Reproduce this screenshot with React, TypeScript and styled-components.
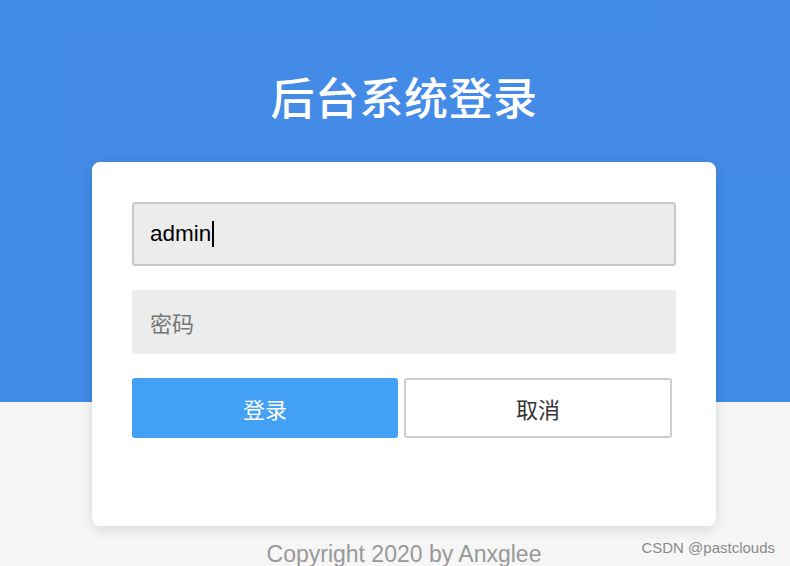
import React from "react";
import styled, { createGlobalStyle } from "styled-components";

const Global = createGlobalStyle`
  html, body { margin: 0; padding: 0; }
  body { font-family: "Liberation Sans", Arial, "Noto Sans CJK SC", sans-serif; }
`;

const Page = styled.div`
  position: relative;
  height: 566px;
  overflow: hidden;
  background: linear-gradient(to bottom, #418ae6 0, #418ae6 402px, #f6f6f6 402px);
  display: flex;
  flex-direction: column;
  align-items: center;
  padding: 70px 0 0 18px;
  box-sizing: border-box;
`;

const Tile = styled.div<{ $x: number; $y: number; $w: number; $h: number; $a: number }>`
  position: absolute;
  left: ${(p) => p.$x}px;
  top: ${(p) => p.$y}px;
  width: ${(p) => p.$w}px;
  height: ${(p) => p.$h}px;
  background: rgba(255, 255, 255, ${(p) => p.$a});
  pointer-events: none;
`;

const Title = styled.h1`
  position: relative;
  margin: 0;
  font-family: "Noto Sans CJK SC", sans-serif;
  font-weight: 500;
  font-size: 44px;
  line-height: 53px;
  color: #ffffff;
  letter-spacing: 0.5px;
`;

const Card = styled.div`
  position: relative;
  margin-top: 39px;
  width: 624px;
  box-sizing: border-box;
  padding: 40px 40px 88px;
  background: #ffffff;
  border-radius: 8px;
  box-shadow: 0 4px 14px rgba(0, 0, 0, 0.12);
  display: flex;
  flex-direction: column;
  gap: 24px;
`;

const Field = styled.div<{ $focused?: boolean }>`
  height: 64px;
  box-sizing: border-box;
  background: #ececec;
  border: 2px solid ${(p) => (p.$focused ? "#c8c8c8" : "#ececec")};
  border-radius: 3px;
  padding: 0 16px;
  display: flex;
  align-items: center;
  font-size: 22px;
`;

const Value = styled.span`
  color: #000;
  font-family: "Liberation Sans", Arial, sans-serif;
  font-size: 22.5px;
`;

const Caret = styled.span`
  display: inline-block;
  width: 2px;
  height: 26px;
  background: #000;
  margin-left: 1px;
`;

const Placeholder = styled.span`
  color: #777;
  font-family: "Noto Sans CJK SC", sans-serif;
  font-size: 22px;
`;

const Buttons = styled.div`
  display: flex;
  gap: 6px;
`;

const Button = styled.button<{ $primary?: boolean }>`
  height: 60px;
  width: ${(p) => (p.$primary ? 266 : 268)}px;
  box-sizing: border-box;
  border-radius: 3px;
  font-family: "Noto Sans CJK SC", sans-serif;
  font-size: 22px;
  cursor: pointer;
  border: 2px solid ${(p) => (p.$primary ? "#42a0f5" : "#cccccc")};
  background: ${(p) => (p.$primary ? "#42a0f5" : "#ffffff")};
  color: ${(p) => (p.$primary ? "#ffffff" : "#333333")};
`;

const Copyright = styled.div`
  margin-top: 16px;
  font-family: "Liberation Sans", Arial, sans-serif;
  font-size: 23px;
  line-height: 24px;
  color: #999;
`;

const Watermark = styled.div`
  position: absolute;
  right: 15px;
  bottom: 10px;
  font-family: "Liberation Sans", Arial, sans-serif;
  font-size: 15px;
  color: #8a8a8a;
`;

export default function App() {
  return (
    <>
      <Global />
      <Page>
        <Tile $x={55} $y={33} $w={590} $h={148} $a={0.015} />
        <Tile $x={645} $y={0} $w={145} $h={181} $a={0.01} />
        <Title>后台系统登录</Title>
        <Card>
          <Field $focused>
            <Value>admin</Value>
            <Caret />
          </Field>
          <Field>
            <Placeholder>密码</Placeholder>
          </Field>
          <Buttons>
            <Button $primary>登录</Button>
            <Button>取消</Button>
          </Buttons>
        </Card>
        <Copyright>Copyright 2020 by Anxglee</Copyright>
        <Watermark>CSDN @pastclouds</Watermark>
      </Page>
    </>
  );
}
